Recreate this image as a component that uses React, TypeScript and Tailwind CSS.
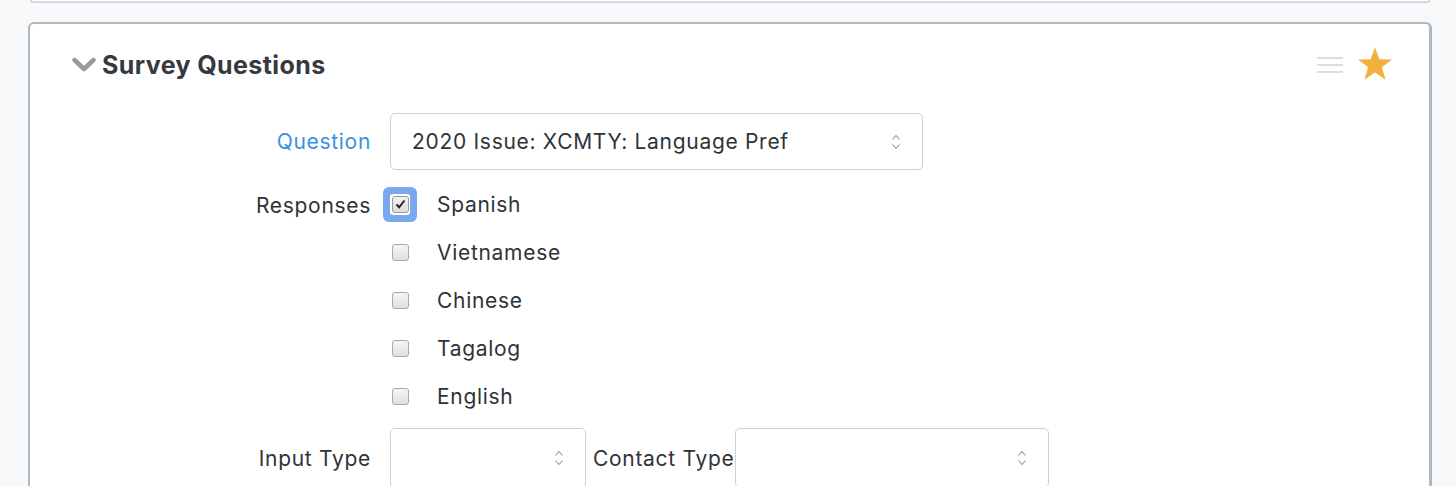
import React from "react";

const font = { fontFamily: "Inter, 'Noto Sans', sans-serif" };

function UpDown() {
  return (
    <svg width="10" height="18" viewBox="0 0 10 18" fill="none" stroke="#8f949a" strokeWidth="1.1">
      <path d="M1.5 6.5 L5 2.5 L8.5 6.5" />
      <path d="M1.5 11.5 L5 15.5 L8.5 11.5" />
    </svg>
  );
}

function Select({ value, className }: { value?: string; className: string }) {
  return (
    <div
      className={`flex items-center justify-between rounded-[5px] border border-[#cdd1d5] bg-white pl-[21px] pr-[21px] text-[#2f3337] ${className}`}
    >
      <span className="pt-[1px]">{value}</span>
      <UpDown />
    </div>
  );
}

function Checkbox({ checked }: { checked?: boolean }) {
  if (checked) {
    return (
      <div className="flex h-[35px] w-[34px] items-center justify-center rounded-[6px] bg-[#7aa7f0]">
        <div className="flex h-[21px] w-[20px] items-center justify-center rounded-[3px] bg-white">
          <div className="flex h-[17px] w-[17px] items-center justify-center rounded-[3px] border border-[#9a9a9a] bg-gradient-to-b from-[#f3f3f3] to-[#dcdcdc]">
            <svg width="11" height="10" viewBox="0 0 11 10">
              <path d="M1.5 5.5 L4.2 8.3 L9.5 1.5" fill="none" stroke="#222" strokeWidth="2" />
            </svg>
          </div>
        </div>
      </div>
    );
  }
  return (
    <div className="flex h-[35px] w-[34px] items-center justify-center">
      <div className="h-[17px] w-[17px] rounded-[3px] border border-[#a8a8a8] bg-gradient-to-b from-[#f6f6f6] to-[#e0e0e0]" />
    </div>
  );
}

export default function App() {
  const responses = ["Spanish", "Vietnamese", "Chinese", "Tagalog", "English"];

  return (
    <div className="h-[486px] w-[1456px] overflow-hidden bg-[#f7f8fa]" style={font}>
      <div className="ml-[30px] mr-[26px] h-[3px] rounded-b-[5px] border-x-2 border-b-2 border-[#d3d8de] bg-white" />

      <div className="ml-[28px] mr-[24px] mt-[19px] h-[500px] rounded-t-[6px] border-2 border-r-[3px] border-[#b2b8c0] bg-white">
        {/* header */}
        <div className="flex h-[82px] items-center justify-between pl-[42px] pr-[37px]">
          <div className="flex items-center gap-[6px]">
            <svg width="24" height="16" viewBox="0 0 24 16" className="mt-[-1px]">
              <path d="M2.5 3 L12 12 L21.5 3" fill="none" stroke="#9a9a9a" strokeWidth="4.5" strokeLinecap="round" strokeLinejoin="round" />
            </svg>
            <h2 className="pt-[1px] text-[25px] font-bold tracking-[0.4px] text-[#343a40]">Survey Questions</h2>
          </div>
          <div className="flex items-center gap-[15px]">
            <div className="flex w-[26px] flex-col gap-[5px]">
              <div className="h-[2px] bg-[#d9dde1]" />
              <div className="h-[2px] bg-[#d9dde1]" />
              <div className="h-[2px] bg-[#d9dde1]" />
            </div>
            <svg width="34" height="33" viewBox="1.4 0.8 21.2 20.4" className="mt-[-4px]">
              <path
                d="M12 0.8 L14.7 8.3 L22.6 8.5 L16.3 13.4 L18.6 21.1 L12 16.6 L5.4 21.1 L7.7 13.4 L1.4 8.5 L9.3 8.3 Z"
                fill="#f2b13e"
              />
            </svg>
          </div>
        </div>

        {/* form */}
        <div className="pt-[7px] text-[21px] tracking-[0.7px] text-[#2f3337]">
          <div className="flex items-center">
            <label className="w-[341px] pt-[1px] text-right text-[#3d8fe0]">Question</label>
            <Select value="2020 Issue: XCMTY: Language Pref" className="ml-[19px] h-[57px] w-[533px]" />
          </div>

          <div className="mt-[10px] flex">
            <label className="w-[341px] pt-[10px] text-right">Responses</label>
            <div className="ml-[12px] flex flex-col">
              {responses.map((r, i) => (
                <div key={r} className="flex h-[48px] items-center">
                  <Checkbox checked={i === 0} />
                  <span className="ml-[20px] pt-[1px]">{r}</span>
                </div>
              ))}
            </div>
          </div>

          <div className="mt-[8px] flex items-center">
            <label className="w-[341px] pt-[1px] text-right">Input Type</label>
            <Select className="ml-[19px] h-[60px] w-[196px]" />
            <label className="ml-[7px] pt-[1px]">Contact Type</label>
            <Select className="ml-[1px] h-[60px] w-[314px]" />
          </div>
        </div>
      </div>
    </div>
  );
}
